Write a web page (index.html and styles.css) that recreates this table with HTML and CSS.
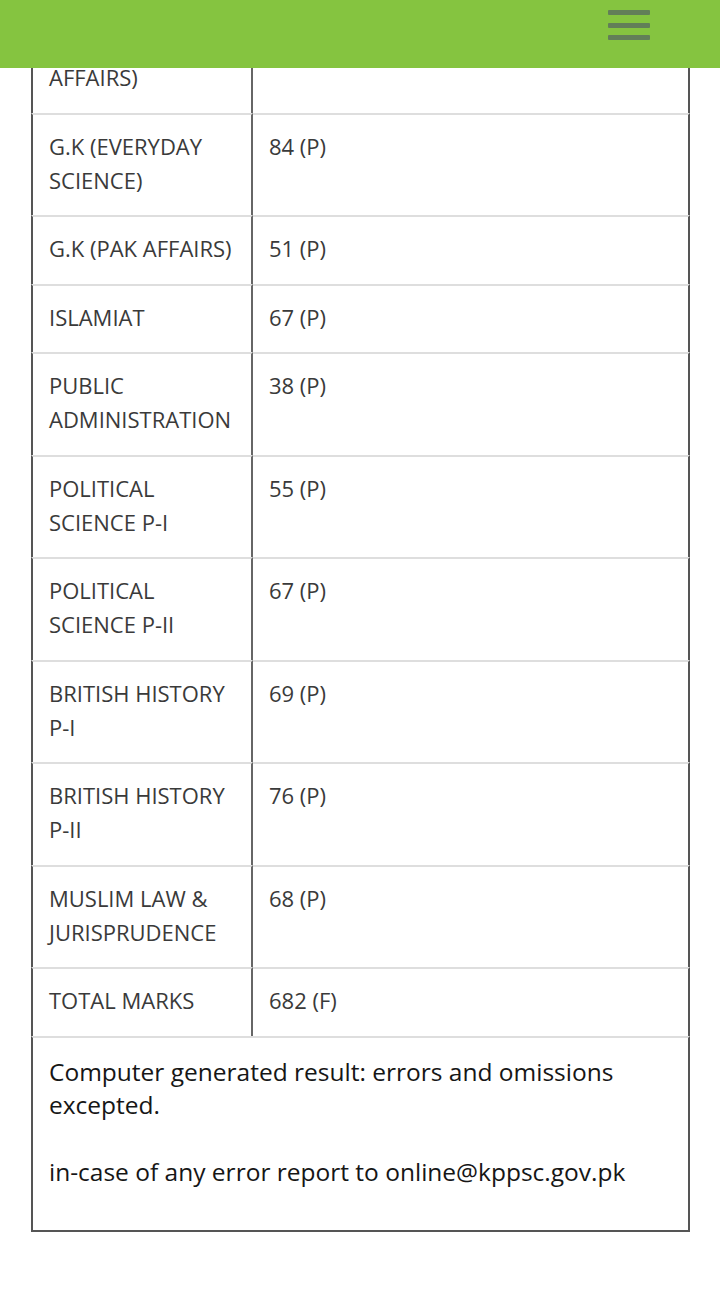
FILE: index.html
```html
<!doctype html>
<html lang="en">
<head>
	<meta charset="UTF-8">
	<meta name="viewport" content="width=device-width, initial-scale=1.0">
	<title>Result</title>
	<link rel="stylesheet" href="styles.css">
</head>
<body>
	<div class="topbar">
		<a class="menu-btn" href="#">
			<span></span>
			<span></span>
			<span></span>
		</a>
	</div>
	<div class="content">
		<table class="result">
			<tr><td class="subject">G.K (CURRENT AFFAIRS)</td><td class="marks"></td></tr>
			<tr><td class="subject">G.K (EVERYDAY SCIENCE)</td><td class="marks">84 (P)</td></tr>
			<tr><td class="subject">G.K (PAK AFFAIRS)</td><td class="marks">51 (P)</td></tr>
			<tr><td class="subject">ISLAMIAT</td><td class="marks">67 (P)</td></tr>
			<tr><td class="subject">PUBLIC ADMINISTRATION</td><td class="marks">38 (P)</td></tr>
			<tr><td class="subject">POLITICAL SCIENCE P-I</td><td class="marks">55 (P)</td></tr>
			<tr><td class="subject">POLITICAL SCIENCE P-II</td><td class="marks">67 (P)</td></tr>
			<tr><td class="subject">BRITISH HISTORY P-I</td><td class="marks">69 (P)</td></tr>
			<tr><td class="subject">BRITISH HISTORY P-II</td><td class="marks">76 (P)</td></tr>
			<tr><td class="subject">MUSLIM LAW &amp; JURISPRUDENCE</td><td class="marks">68 (P)</td></tr>
			<tr><td class="subject">TOTAL MARKS</td><td class="marks">682 (F)</td></tr>
		</table>
		<div class="note">
			<p>Computer generated result: errors and omissions excepted.</p>
			<p>in-case of any error report to online@kppsc.gov.pk</p>
		</div>
	</div>
</body>
</html>
```

FILE: styles.css
```css
body {
	margin: 0;
	background-color: #fff;
	font: 400 22px "Open Sans", sans-serif;
	color: #3a3a3a;
}

.topbar {
	position: fixed;
	top: 0;
	left: 0;
	right: 0;
	z-index: 10;
	height: 68px;
	display: flex;
	justify-content: flex-end;
	align-items: flex-start;
	padding: 10px 70px 0 0;
	box-sizing: border-box;
	background-color: #85c440;
}

.menu-btn {
	display: flex;
	flex-direction: column;
	gap: 7.5px;
	width: 42px;
}

.menu-btn span {
	display: block;
	height: 5px;
	border-radius: 1px;
	background-color: #627f58;
}

.content {
	padding: 12px 30px 74px 31px;
}

.result {
	width: 100%;
	border-collapse: separate;
	border-spacing: 0;
}

.result td {
	vertical-align: top;
	padding: 14px 16px 18.5px;
	line-height: 34px;
}

.result tr + tr td {
	border-top: 2px solid #dedede;
}

.subject {
	width: 186px;
	border-left: 2px solid #555;
	border-right: 2px solid #666;
}

.marks {
	border-right: 2px solid #555;
}

.note {
	border: 2px solid #555;
	border-top: 2px solid #dedede;
	padding: 17px 16px 42px;
	font-size: 24.5px;
	color: #161616;
	line-height: 33px;
}

.note p {
	margin: 0 0 34px;
}

.note p:last-child {
	margin-bottom: 0;
}
```
